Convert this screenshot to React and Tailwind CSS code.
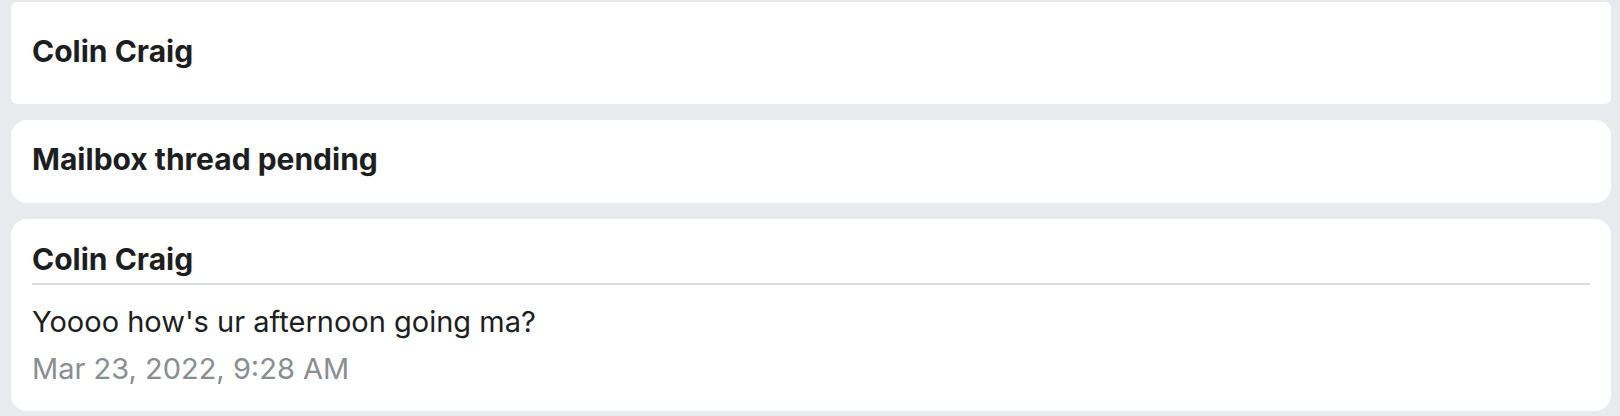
import React from 'react';

const Heading = ({ children }) => (
  <p className="text-[30px] leading-[40px] font-bold text-[#1c1e21]">{children}</p>
);

export default function App() {
  return (
    <main
      className="min-h-screen bg-[#e9eaee] pt-[2px] pl-[11px] pr-[9px] pb-1 flex flex-col gap-4"
      style={{ fontFamily: 'Inter, "Liberation Sans", sans-serif' }}
    >
      <section className="bg-white rounded-md px-[21px] pt-[29px] pb-[33px]">
        <Heading>Colin Craig</Heading>
      </section>

      <section className="bg-white rounded-2xl px-[21px] pt-[19px] pb-[24px]">
        <Heading>Mailbox thread pending</Heading>
      </section>

      <section className="bg-white rounded-2xl px-[21px] pt-5 pb-6">
        <div className="border-b-2 border-[#dadde1] pb-[4px]">
          <Heading>Colin Craig</Heading>
        </div>
        <p className="mt-[19px] text-[29px] leading-[36px] text-[#1c1e21]">
          Yoooo how's ur afternoon going ma?
        </p>
        <p className="mt-[11px] text-[29px] leading-[36px] text-[#8a8d91]">
          Mar 23, 2022, 9:28 AM
        </p>
      </section>
    </main>
  );
}
